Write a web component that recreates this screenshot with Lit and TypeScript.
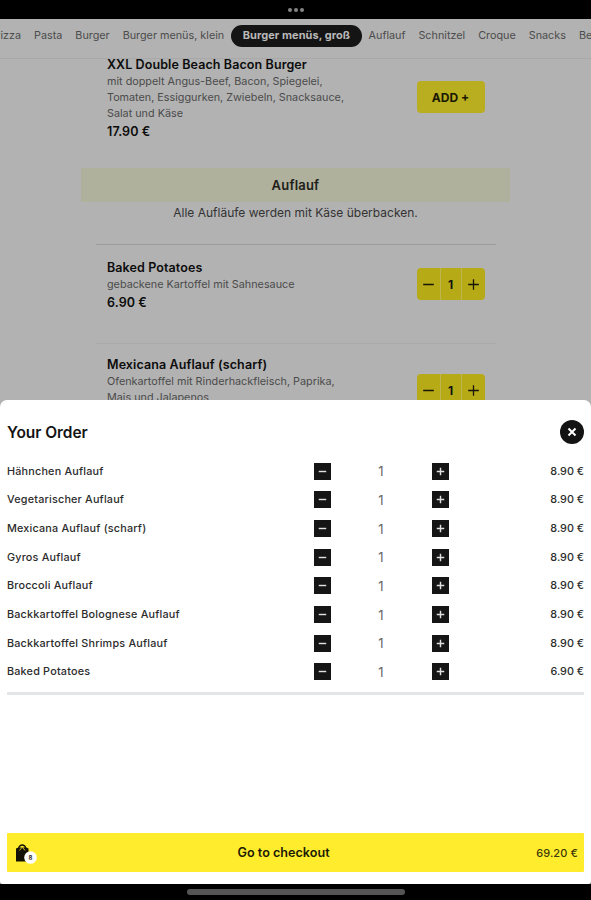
import { LitElement, html, css, svg } from "lit";
import { customElement, property } from "lit/decorators.js";

const sheetRows: [string, string][] = [
  ["Hähnchen Auflauf", "8.90 €"],
  ["Vegetarischer Auflauf", "8.90 €"],
  ["Mexicana Auflauf (scharf)", "8.90 €"],
  ["Gyros Auflauf", "8.90 €"],
  ["Broccoli Auflauf", "8.90 €"],
  ["Backkartoffel Bolognese Auflauf", "8.90 €"],
  ["Backkartoffel Shrimps Auflauf", "8.90 €"],
  ["Baked Potatoes", "6.90 €"],
];

const categories = [
  "Pizza", "Pasta", "Burger", "Burger menüs, klein", "Burger menüs, groß",
  "Auflauf", "Schnitzel", "Croque", "Snacks", "Beilagen",
];

const minus = svg`<path d="M3 8H13"/>`;
const plus = svg`<path d="M3 8H13M8 3V13"/>`;

@customElement("category-bar")
class CategoryBar extends LitElement {
  static styles = css`
    :host { display: block; height: 40px; overflow: hidden; border-bottom: 1px solid #a8a8a8; box-sizing: border-box; background: #b2b2b2; }
    .track { display: flex; height: 33px; align-items: center; margin-left: -13px; width: max-content; }
    .tab { padding: 0 6.5px; font-size: 10.8px; color: #4c4c4c; white-space: nowrap; }
    .active { height: 22px; line-height: 21px; padding: 0 12px; border-radius: 11px; background: #141414; color: #b9b9b9; font-size: 11px; font-weight: 700; letter-spacing: 0.05px; }
  `;
  render() {
    return html`<div class="track">${categories.map(
      (c, i) => html`<span class="tab ${i === 4 ? "active" : ""}">${c}</span>`
    )}</div>`;
  }
}

@customElement("quantity-stepper")
class QuantityStepper extends LitElement {
  static styles = css`
    :host { display: flex; width: 68px; height: 32px; border-radius: 4px; overflow: hidden; background: #b6aa17; }
    .cell { display: flex; align-items: center; justify-content: center; font-size: 12px; font-weight: 700; color: #111; }
    .side { width: 23px; }
    .mid { width: 22px; box-sizing: border-box; border: solid #bdb452; border-width: 0 1px; }
    svg { width: 17px; height: 17px; stroke: #161508; stroke-width: 1.2; fill: none; }
  `;
  render() {
    return html`<span class="cell side"><svg viewBox="0 0 16 16">${minus}</svg></span>
      <span class="cell mid">1</span>
      <span class="cell side"><svg viewBox="0 0 16 16">${plus}</svg></span>`;
  }
}

@customElement("menu-dish")
class MenuDish extends LitElement {
  static styles = css`
    :host { display: flex; justify-content: space-between; padding: 0 11px 0 11.5px; box-sizing: border-box; width: 400px; margin: 0 auto; }
    .name, .price { font-size: 12.5px; line-height: 18px; font-weight: 600; color: #0c0c0c; letter-spacing: 0.1px; }
    .desc { font-size: 10.8px; line-height: 16px; color: #4b4b4b; white-space: pre; }
    .price { padding-top: 1px; }
  `;
  @property() name = "";
  @property() desc = "";
  @property() price = "";
  render() {
    return html`<div>
        <div class="name">${this.name}</div>
        <div class="desc">${this.desc}</div>
        <div class="price">${this.price}</div>
      </div>
      <slot></slot>`;
  }
}

@customElement("order-sheet")
class OrderSheet extends LitElement {
  static styles = css`
    :host { display: flex; flex-direction: column; height: 484px; box-sizing: border-box; padding: 0 7px 12px; background: #fff; border-radius: 7px 7px 3px 3px; }
    .head { display: flex; justify-content: space-between; align-items: center; padding-top: 7px; height: 50px; }
    .title { font-size: 15.5px; line-height: 20px; padding-top: 1px; font-weight: 600; color: #141414; letter-spacing: -0.06px; }
    .close { width: 24px; height: 24px; }
    .row { display: grid; grid-template-columns: 306.5px 17px 101px 17px 1fr; height: 28.65px; align-items: center; font-size: 10.8px; font-weight: 500; color: #2c2c2c; letter-spacing: 0.2px; }
    .box { width: 17px; height: 17px; display: block; }
    .count { text-align: center; font-size: 13px; line-height: 17px; padding-top: 1px; font-weight: 400; color: #666; }
    .cost { text-align: right; letter-spacing: 0; }
    .rule { height: 3px; background: #e3e6e6; margin-top: 5.5px; }
    .checkout { display: flex; justify-content: space-between; align-items: center; height: 39px; margin-top: auto; padding: 0 6px 0 8px; background: #ffec2d; border-radius: 1px; }
    .bag { width: 16px; height: 24px; overflow: visible; }
    .go { font-size: 12.6px; line-height: 16px; font-weight: 600; color: #1c1a05; }
    .total { font-size: 11px; line-height: 14px; color: #3c3808; font-weight: 500; letter-spacing: 0.1px; }
    .badge { font: 700 6px Inter, sans-serif; fill: #333; }
  `;
  render() {
    const btn = (sign: unknown) => html`<svg class="box" viewBox="0 0 17 17">
      <rect width="17" height="17" fill="#151515"/>
      <g transform="translate(8.5 8.5) scale(.75) translate(-8 -8)" stroke="#e0e0e0" stroke-width="1.9">${sign}</g>
    </svg>`;
    return html`
      <div class="head">
        <span class="title">Your Order</span>
        <svg class="close" viewBox="0 0 24 24">
          <circle cx="12" cy="12" r="12" fill="#131313"/>
          <path d="M8.5 8.5L15.5 15.5M15.5 8.5L8.5 15.5" stroke="#fff" stroke-width="2"/>
        </svg>
      </div>
      ${sheetRows.map(([name, cost]) => html`<div class="row">
        <span>${name}</span>${btn(minus)}<span class="count">1</span>${btn(plus)}<span class="cost">${cost}</span>
      </div>`)}
      <div class="rule"></div>
      <div class="checkout">
        <svg class="bag" viewBox="0 0 16 24">
          <path d="M1 7.500L3.500 6.500H11L13.500 7.500V20.500H1Z" fill="#141204"/>
          <path d="M3.500 9V7.500Q4.500 4 7.300 4Q10 4 11 7.500V9" fill="none" stroke="#141204" stroke-width="1.300"/>
          <path d="M4.500 9.500L7.300 6L10 9.500" fill="none" stroke="#c9ba22" stroke-width="1"/>
          <circle cx="15.500" cy="16.500" r="6.300" fill="#fff"/>
          <text class="badge" x="15.500" y="18.700" text-anchor="middle">8</text>
        </svg>
        <span class="go">Go to checkout</span>
        <span class="total">69.20 €</span>
      </div>`;
  }
}

@customElement("app-root")
class AppRoot extends LitElement {
  static styles = css`
    :host { display: flex; flex-direction: column; width: 591px; height: 900px; overflow: hidden; background: #000; font-family: Inter, "Liberation Sans", sans-serif; }
    .status { height: 19px; flex: none; display: flex; align-items: center; justify-content: center; gap: 2px; padding-top: 1px; box-sizing: border-box; }
    .dot { width: 4px; height: 4px; border-radius: 50%; background: #858585; }
    .page { height: 341px; flex: none; overflow: hidden; background: #b2b2b2; }
    .first { margin-top: -3px; height: 112px; }
    .add { width: 68px; height: 32px; margin-top: 25px; border-radius: 4px; background: #b9ad20; font-size: 12px; font-weight: 700; color: #191803; display: flex; align-items: center; justify-content: center; }
    .banner { width: 429px; height: 34px; line-height: 34px; margin: 0 auto; background: #b0b19d; text-align: center; font-size: 13px; font-weight: 600; color: #20201a; letter-spacing: 0.2px; }
    .note { text-align: center; font-size: 12px; line-height: 22px; color: #333; height: 42px; }
    .divider { width: 400px; height: 1px; margin: 0 auto; background: #9c9c9c; }
    .faint { background: #aaa; }
    .second { padding-top: 14px; height: 98px; }
    .second quantity-stepper { margin-top: 9px; }
    .third { padding-top: 12px; }
    .third quantity-stepper { margin-top: 18px; }
    .shell { flex: none; background: linear-gradient(#b2b2b2 0 50%, #999 50%); height: 484px; }
    .foot { flex: 1; display: flex; justify-content: center; padding-top: 5px; }
    .home { width: 218px; height: 6px; border-radius: 3px; background: #555; }
  `;
  render() {
    return html`
      <div class="status"><i class="dot"></i><i class="dot"></i><i class="dot"></i></div>
      <category-bar></category-bar>
      <div class="page">
        <menu-dish class="first" name="XXL Double Beach Bacon Burger"
          .desc=${"mit doppelt Angus-Beef, Bacon, Spiegelei,\nTomaten, Essiggurken, Zwiebeln, Snacksauce,\nSalat und Käse"}
          price="17.90 €"><div class="add">ADD +</div></menu-dish>
        <div class="banner">Auflauf</div>
        <div class="note">Alle Aufläufe werden mit Käse überbacken.</div>
        <div class="divider"></div>
        <menu-dish class="second" name="Baked Potatoes" desc="gebackene Kartoffel mit Sahnesauce" price="6.90 €">
          <quantity-stepper></quantity-stepper></menu-dish>
        <div class="divider faint"></div>
        <menu-dish class="third" name="Mexicana Auflauf (scharf)"
          .desc=${"Ofenkartoffel mit Rinderhackfleisch, Paprika,\nMais und Jalapenos"} price="8.90 €">
          <quantity-stepper></quantity-stepper></menu-dish>
      </div>
      <div class="shell"><order-sheet></order-sheet></div>
      <div class="foot"><div class="home"></div></div>`;
  }
}
